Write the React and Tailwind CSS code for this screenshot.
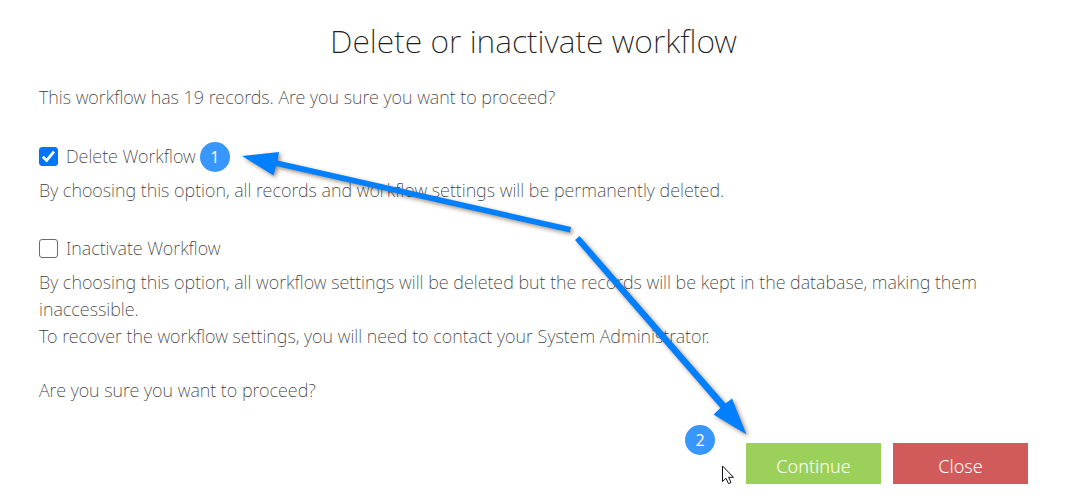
import { useState } from "react";

function Badge({ children }) {
  return (
    <span className="flex size-[30px] items-center justify-center rounded-full bg-[#3797fc] font-['Open_Sans',sans-serif] text-base font-normal text-white">
      {children}
    </span>
  );
}

function Option({ id, label, checked, onChange, children, badge }) {
  return (
    <div className="mb-[31px]">
      <div className="relative flex h-[27px] items-center gap-2">
        <input
          id={id}
          type="checkbox"
          checked={checked}
          onChange={onChange}
          className="peer size-[19px] shrink-0 appearance-none rounded-[3px] border border-[#6b6b6b] bg-white checked:border-[#0075ff] checked:bg-[#0075ff]"
        />
        <svg viewBox="0 0 19 19" className="pointer-events-none absolute left-0 hidden size-[19px] peer-checked:block" aria-hidden="true">
          <path d="M3.8 9.8 L7.6 13.4 L15 4.6" fill="none" stroke="#fff" strokeWidth="2.8" />
        </svg>
        <div className="flex items-center gap-1">
          <label htmlFor={id}>{label}</label>
          {badge}
        </div>
      </div>
      <div className="mt-[7px]">{children}</div>
    </div>
  );
}

function Arrows() {
  return (
    <svg
      width="520"
      height="300"
      viewBox="240 145 520 300"
      className="pointer-events-none absolute left-60 top-[145px] drop-shadow-[2px_2px_2px_rgba(60,30,0,0.5)]"
      aria-hidden="true"
    >
      <g fill="#0080ff">
        <path d="M242 156 L279 152 L277.500 160.500 L571 227 L570 232.500 L276 166 L273.500 175.500 Z" />
        <path d="M579.500 236 L725.500 403.500 L732 398.500 L746.500 434.500 L713.500 414.500 L720.500 408 L575 240 Z" />
      </g>
    </svg>
  );
}

export default function App() {
  const [choice, setChoice] = useState("delete");
  return (
    <main className="relative min-h-screen bg-white pt-[19px] pr-[42px] pb-3 pl-[39px] font-['Noto_Sans',sans-serif] text-lg leading-[27px] font-extralight text-[#3a3a3a]">
      <h1 className="text-center text-[32px] leading-[44px] text-[#1d1d1d]">Delete or inactivate workflow</h1>
      <p className="mt-[21px] mb-8">This workflow has 19 records. Are you sure you want to proceed?</p>
      <Option
        id="delete"
        label="Delete Workflow"
        checked={choice === "delete"}
        onChange={() => setChoice("delete")}
        badge={<Badge>1</Badge>}
      >
        <p>By choosing this option, all records and workflow settings will be permanently deleted.</p>
      </Option>
      <Option
        id="inactivate"
        label="Inactivate Workflow"
        checked={choice === "inactivate"}
        onChange={() => setChoice("inactivate")}
      >
        <p>
          By choosing this option, all workflow settings will be deleted but the records will be kept in the database,
          making them inaccessible.
        </p>
        <p>To recover the workflow settings, you will need to contact your System Administrator.</p>
        <p className="mt-[27px]">Are you sure you want to proceed?</p>
      </Option>
      <div className="flex justify-end gap-3 pt-2 text-white">
        <button type="button" className="h-[41px] w-[135px] bg-[#9bd15b] pt-[5px] font-light">
          Continue
        </button>
        <button type="button" className="h-[41px] w-[135px] bg-[#d15a5a] pt-[5px] font-light">
          Close
        </button>
      </div>
      <Arrows />
      <div className="absolute left-[685px] top-[425px]">
        <Badge>2</Badge>
      </div>
      <svg width="14" height="20" viewBox="0 0 14 20" className="absolute left-[721px] top-[465px]" aria-hidden="true">
        <path d="M1.500 1 V16.500 L5 13.200 L7.500 18.700 L10 17.500 L7.600 12.300 H12.500 Z" fill="#fff" stroke="#111122" />
      </svg>
    </main>
  );
}
